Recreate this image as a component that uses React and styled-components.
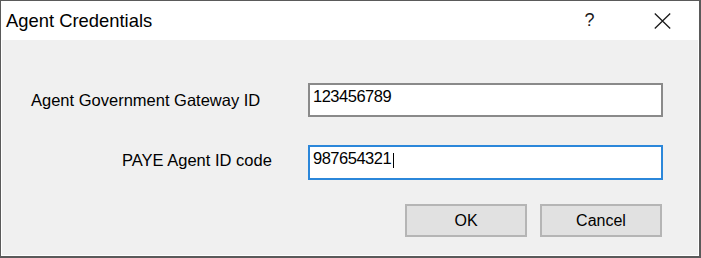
import React from "react";
import styled, { createGlobalStyle } from "styled-components";

const GlobalStyle = createGlobalStyle`
  html, body { margin: 0; padding: 0; background: #ffffff; }
  body { font-family: "Liberation Sans", Arial, sans-serif; }
`;

const Window = styled.div`
  box-sizing: border-box;
  width: 701px;
  height: 258px;
  border: 1px solid #5a5a5a;
  border-right-width: 2px;
  border-bottom-width: 2px;
  display: flex;
  flex-direction: column;
  background: #ffffff;
`;

const TitleBar = styled.div`
  flex: none;
  height: 39px;
  display: flex;
  align-items: center;
  background: #ffffff;
`;

const Title = styled.div`
  flex: 1;
  padding-left: 5px;
  font-size: 18.4px;
  color: #000000;
`;

const TitleButton = styled.div`
  width: 73px;
  height: 39px;
  display: flex;
  align-items: center;
  justify-content: center;
  color: #1a1a1a;
  font-size: 18px;
`;

const Body = styled.div`
  flex: 1;
  background: #f0f0f0;
  border: 1px solid #ffffff;
  border-top: none;
  padding-top: 43px;
  display: flex;
  flex-direction: column;
`;

const Row = styled.div`
  display: flex;
  align-items: center;
  margin-bottom: ${(p) => p.$gap}px;
`;

const Label = styled.div`
  box-sizing: border-box;
  width: 306px;
  padding-left: ${(p) => p.$indent}px;
  margin-bottom: ${(p) => p.$raise || 0}px;
  font-size: 16.5px;
  color: #000000;
`;

const TextBox = styled.div`
  box-sizing: border-box;
  width: 355px;
  height: ${(p) => p.$h}px;
  border: 2px solid ${(p) => (p.$focused ? "#2b87da" : "#8a8a8a")};
  background: #ffffff;
  padding: 2px 3px 0;
  display: flex;
  align-items: flex-start;
  font-size: 16.5px;
  letter-spacing: -0.5px;
  line-height: 19px;
  color: #000000;
`;

const Caret = styled.span`
  width: 1px;
  height: 15px;
  margin-top: 4px;
  margin-left: 2px;
  background: #000000;
`;

const ButtonRow = styled.div`
  display: flex;
  justify-content: flex-end;
  gap: 13px;
  padding-right: 36px;
`;

const Button = styled.div`
  box-sizing: border-box;
  width: 122px;
  height: 33px;
  border: 2px solid #b5b5b5;
  background: #e1e1e1;
  display: flex;
  align-items: center;
  justify-content: center;
  font-size: 16px;
  color: #000000;
`;

const CloseIcon = () => (
  <svg width="17" height="16" viewBox="0 0 17 16">
    <path d="M0.8 0.5 L16.2 15.5 M16.2 0.5 L0.8 15.5" stroke="#1a1a1a" strokeWidth="1.3" fill="none" />
  </svg>
);

export default function App() {
  return (
    <>
      <GlobalStyle />
      <Window>
        <TitleBar>
          <Title>Agent Credentials</Title>
          <TitleButton>?</TitleButton>
          <TitleButton>
            <CloseIcon />
          </TitleButton>
        </TitleBar>
        <Body>
          <Row $gap={28}>
            <Label $indent={29}>Agent Government Gateway ID</Label>
            <TextBox $h={34}>123456789</TextBox>
          </Row>
          <Row $gap={24}>
            <Label $indent={120} $raise={5}>PAYE Agent ID code</Label>
            <TextBox $h={35} $focused>
              987654321
              <Caret />
            </TextBox>
          </Row>
          <ButtonRow>
            <Button>OK</Button>
            <Button>Cancel</Button>
          </ButtonRow>
        </Body>
      </Window>
    </>
  );
}
